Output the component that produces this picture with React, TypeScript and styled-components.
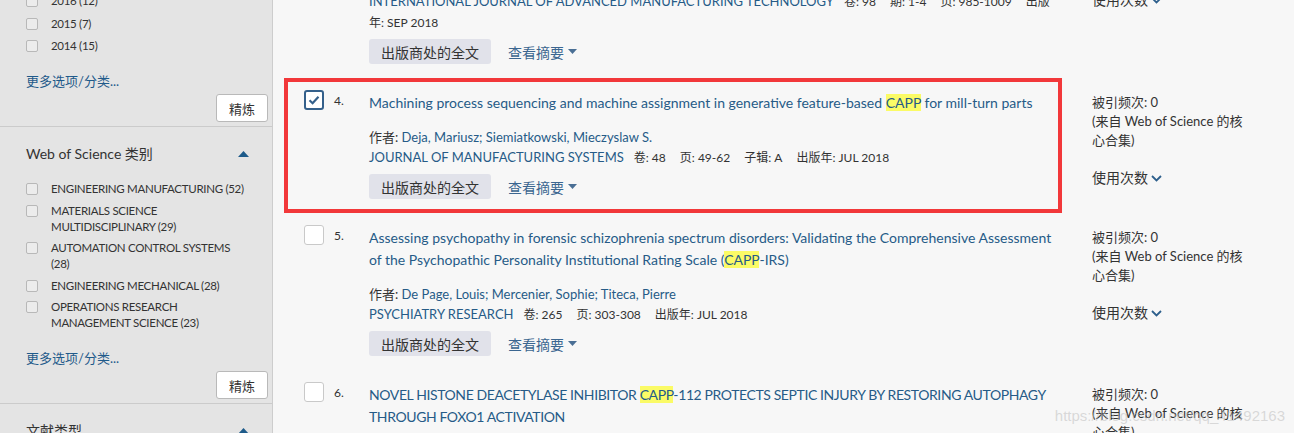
import React from 'react';
import styled, { createGlobalStyle } from 'styled-components';

const GlobalStyle = createGlobalStyle`
  html, body {
    margin: 0;
    padding: 0;
  }
  body {
    background: #f7f7f7;
    font-family: Lato, "Noto Sans CJK SC", sans-serif;
    color: #333;
  }
`;

const Viewport = styled.div`
  position: relative;
  width: 1294px;
  height: 433px;
  overflow: hidden;
  display: flex;
  align-items: flex-start;
`;

/* ---------- sidebar ---------- */

const Sidebar = styled.aside`
  width: 272px;
  flex: none;
  align-self: stretch;
  background: #e4e4e4;
  border-right: 1px solid #cdcdcd;
`;

const Section = styled.section`
  padding: 0 4px 4px 26px;
  border-bottom: 1px solid #cbcbcb;
`;

const SectionHeader = styled.div`
  display: flex;
  align-items: center;
  justify-content: space-between;
  padding: 17px 19px 0 0;
  height: 20px;
  font-size: 14px;
  line-height: 20px;
  color: #333;
`;

// the year list is partly scrolled out of view at the top of the page
const FilterList = styled.ul<{ $scrolled?: boolean }>`
  list-style: none;
  margin: ${p => (p.$scrolled ? '-7px' : '17px')} 0 0;
  padding: 0 17px 0 0;
  display: flex;
  flex-direction: column;
  gap: ${p => (p.$scrolled ? '6.5px' : '5.5px')};
`;

const FilterItem = styled.li`
  display: flex;
  align-items: flex-start;
  gap: 13px;
  font-size: 11.5px;
  letter-spacing: -0.3px;
  line-height: 16px;
  color: #333;
`;

const FilterBox = styled.span`
  width: 12px;
  height: 12px;
  box-sizing: border-box;
  flex: none;
  margin-top: 2px;
  border: 1px solid #b8b8b8;
  border-radius: 2px;
  background: #ececec;
`;

const MoreLink = styled.div`
  margin-top: 17px;
  font-size: 13px;
  line-height: 20px;
  color: #1f5a8a;
`;

const RefineRow = styled.div`
  display: flex;
  justify-content: flex-end;
  margin-top: 3px;
`;

const RefineButton = styled.button`
  width: 52px;
  height: 28px;
  padding: 0;
  background: #fff;
  border: 1px solid #b9b9b9;
  border-radius: 3px;
  font-family: inherit;
  font-size: 13px;
  color: #333;
`;

const UpArrow = () => (
  <svg width="11" height="6" viewBox="0 0 11 6">
    <path d="M0 6 L5.5 0 L11 6 Z" fill="#1e5b8a" />
  </svg>
);

/* ---------- results ---------- */

const Results = styled.main`
  flex: 1;
  padding-left: 11px;
  margin-top: -100px;
`;

const RecordRow = styled.div`
  display: flex;
  align-items: flex-start;
`;

const RecordBody = styled.div<{ $marked?: boolean }>`
  width: 778px;
  box-sizing: border-box;
  flex: none;
  display: flex;
  align-items: flex-start;
  padding: 8px 0 10px 16px;
  border: 4px solid ${p => (p.$marked ? '#f2383a' : 'transparent')};
`;

const RecordCheck = styled.span<{ $checked?: boolean }>`
  width: 20px;
  height: 20px;
  box-sizing: border-box;
  flex: none;
  display: flex;
  align-items: center;
  justify-content: center;
  background: #fff;
  border: ${p => (p.$checked ? '2px solid #34608b' : '1px solid #c9c9c9')};
  border-radius: 3px;
`;

const RecordNumber = styled.span`
  width: 45px;
  flex: none;
  padding-left: 10px;
  box-sizing: border-box;
  margin-top: 2px;
  font-size: 12px;
  line-height: 18px;
  color: #333;
`;

const RecordContent = styled.div`
  flex: 1;
  min-width: 0;
  margin-top: 2px;
`;

const Title = styled.div<{ $caps?: boolean }>`
  font-size: 14px;
  line-height: 22px;
  letter-spacing: ${p => (p.$caps ? '-0.4px' : '0')};
  color: #265b87;
`;

const Mark = styled.mark`
  background: #fbfb66;
  color: inherit;
  padding: 0;
`;

const Authors = styled.div`
  margin-top: 13px;
  font-size: 13px;
  line-height: 20px;
  color: #265b87;
`;

const Label = styled.span`
  color: #333;
`;

const SourceLine = styled.div`
  font-size: 12px;
  line-height: 21px;
  color: #333;

  & > span {
    vertical-align: top;
    line-height: 21px;
  }
`;

const Journal = styled.span`
  font-size: 13px;
  color: #265b87;
  margin-right: 10px;
`;

const MetaField = styled.span`
  margin-right: 14px;
`;

const ActionRow = styled.div`
  display: flex;
  align-items: center;
  gap: 17px;
  margin-top: 6px;
`;

const FullTextButton = styled.span`
  height: 25px;
  padding: 0 12px;
  display: inline-flex;
  align-items: center;
  background: #e1e2ea;
  border-radius: 3px;
  font-size: 14px;
  color: #333;
`;

const AbstractToggle = styled.span`
  display: inline-flex;
  align-items: center;
  gap: 4px;
  font-size: 14px;
  color: #3b6690;
`;

const SideInfo = styled.div`
  width: 152px;
  margin-left: 30px;
  padding-top: 15px;
  font-size: 13px;
  line-height: 19px;
  color: #333;
`;

const UsageToggle = styled.div`
  display: flex;
  align-items: center;
  gap: 3px;
  margin-top: 18px;
  font-size: 14px;
  line-height: 20px;
  color: #333;
`;

const Watermark = styled.div`
  position: absolute;
  right: 9px;
  bottom: 9px;
  font-family: "Liberation Sans", Arial, sans-serif;
  font-size: 15px;
  color: rgba(190, 190, 190, 0.55);
  pointer-events: none;
`;

const CheckMark = () => (
  <svg width="12" height="12" viewBox="0 0 12 12">
    <path d="M1.5 6.2 L4.6 9.2 L10.5 2.8" fill="none" stroke="#34608b" strokeWidth="2.2" />
  </svg>
);

const DownCaret = () => (
  <svg width="9" height="5" viewBox="0 0 9 5">
    <path d="M0 0 L9 0 L4.5 5 Z" fill="#4a6f95" />
  </svg>
);

const Chevron = () => (
  <svg width="11" height="7" viewBox="0 0 11 7">
    <path d="M1 1 L5.5 5.5 L10 1" fill="none" stroke="#2d5f8c" strokeWidth="1.8" />
  </svg>
);

interface Record {
  index: number;
  checked?: boolean;
  title: string;
  authors?: string;
  journal?: string;
  meta?: [string, string][];
}

const records: Record[] = [
  {
    index: 3,
    title:
      'An integrated approach for CAPP based on machining features and process knowledge for complex prismatic parts with multiple setups',
    authors: '',
    journal: 'INTERNATIONAL JOURNAL OF ADVANCED MANUFACTURING TECHNOLOGY',
    meta: [
      ['卷', '98'],
      ['期', '1-4'],
      ['页', '985-1009'],
      ['出版年', 'SEP 2018'],
    ],
  },
  {
    index: 4,
    checked: true,
    title:
      'Machining process sequencing and machine assignment in generative feature-based CAPP for mill-turn parts',
    authors: 'Deja, Mariusz; Siemiatkowski, Mieczyslaw S.',
    journal: 'JOURNAL OF MANUFACTURING SYSTEMS',
    meta: [
      ['卷', '48'],
      ['页', '49-62'],
      ['子辑', 'A'],
      ['出版年', 'JUL 2018'],
    ],
  },
  {
    index: 5,
    title:
      'Assessing psychopathy in forensic schizophrenia spectrum disorders: Validating the Comprehensive Assessment of the Psychopathic Personality Institutional Rating Scale (CAPP-IRS)',
    authors: 'De Page, Louis; Mercenier, Sophie; Titeca, Pierre',
    journal: 'PSYCHIATRY RESEARCH',
    meta: [
      ['卷', '265'],
      ['页', '303-308'],
      ['出版年', 'JUL 2018'],
    ],
  },
  {
    index: 6,
    title:
      'NOVEL HISTONE DEACETYLASE INHIBITOR CAPP-112 PROTECTS SEPTIC INJURY BY RESTORING AUTOPHAGY THROUGH FOXO1 ACTIVATION',
  },
];

const years = ['2016 (12)', '2015 (7)', '2014 (15)'];

const categories = [
  'ENGINEERING MANUFACTURING (52)',
  'MATERIALS SCIENCE MULTIDISCIPLINARY (29)',
  'AUTOMATION CONTROL SYSTEMS (28)',
  'ENGINEERING MECHANICAL (28)',
  'OPERATIONS RESEARCH MANAGEMENT SCIENCE (23)',
];

function highlight(text: string) {
  return text.split('CAPP').map((part, i) => (
    <React.Fragment key={i}>
      {i > 0 && <Mark>CAPP</Mark>}
      {part}
    </React.Fragment>
  ));
}

function Filters({ items, scrolled }: { items: string[]; scrolled?: boolean }) {
  return (
    <>
      <FilterList $scrolled={scrolled}>
        {items.map(item => (
          <FilterItem key={item}>
            <FilterBox />
            <span>{item}</span>
          </FilterItem>
        ))}
      </FilterList>
      <MoreLink>更多选项/分类...</MoreLink>
      <RefineRow>
        <RefineButton>精炼</RefineButton>
      </RefineRow>
    </>
  );
}

function ResultRecord({ record }: { record: Record }) {
  return (
    <RecordRow>
      <RecordBody $marked={record.checked}>
        <RecordCheck $checked={record.checked}>{record.checked && <CheckMark />}</RecordCheck>
        <RecordNumber>{record.index}.</RecordNumber>
        <RecordContent>
          <Title $caps={record.title === record.title.toUpperCase()}>{highlight(record.title)}</Title>
          {record.journal && (
            <>
              <Authors>
                <Label>作者: </Label>
                {record.authors}
              </Authors>
              <SourceLine>
                <Journal>{record.journal}</Journal>
                {record.meta?.map(([k, v]) => (
                  <MetaField key={k}>
                    {k}: {v}
                  </MetaField>
                ))}
              </SourceLine>
              <ActionRow>
                <FullTextButton>出版商处的全文</FullTextButton>
                <AbstractToggle>
                  查看摘要 <DownCaret />
                </AbstractToggle>
              </ActionRow>
            </>
          )}
        </RecordContent>
      </RecordBody>
      <SideInfo>
        <div>被引频次: 0</div>
        <div>(来自 Web of Science 的核心合集)</div>
        <UsageToggle>
          使用次数 <Chevron />
        </UsageToggle>
      </SideInfo>
    </RecordRow>
  );
}

export default function App() {
  return (
    <Viewport>
      <GlobalStyle />
      <Sidebar>
        <Section>
          <Filters items={years} scrolled />
        </Section>
        <Section>
          <SectionHeader>
            <span>Web of Science 类别</span>
            <UpArrow />
          </SectionHeader>
          <Filters items={categories} />
        </Section>
        <Section>
          <SectionHeader>
            <span>文献类型</span>
            <UpArrow />
          </SectionHeader>
        </Section>
      </Sidebar>
      <Results>
        {records.map(r => (
          <ResultRecord key={r.index} record={r} />
        ))}
      </Results>
      <Watermark>https://blog.csdn.net/qq_41492163</Watermark>
    </Viewport>
  );
}
